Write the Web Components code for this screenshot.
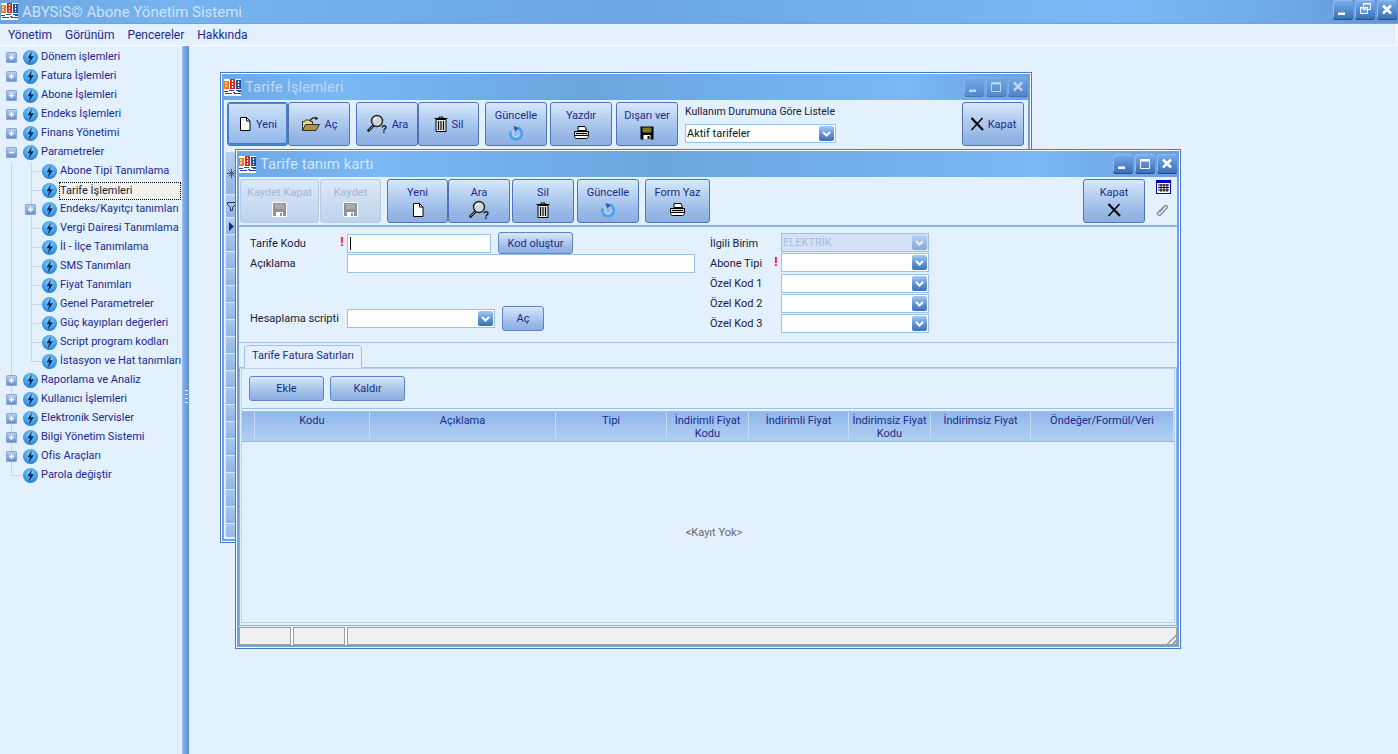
<!DOCTYPE html>
<html lang="tr">
<head>
<meta charset="utf-8">
<title>ABYSiS Abone Yönetim Sistemi</title>
<style>
  html, body { margin: 0; height: 100%; overflow: hidden; }
  body { background: #e3f0fe; font: 11px Roboto, "Noto Sans", sans-serif; color: #15428b; }
  app-shell { height: 754px; }
</style>
</head>
<body>
<app-shell>
  <tree-panel slot="tree">
    <tree-item mode="plus" label="Dönem işlemleri"></tree-item>
    <tree-item mode="plus" label="Fatura İşlemleri"></tree-item>
    <tree-item mode="plus" label="Abone İşlemleri"></tree-item>
    <tree-item mode="plus" label="Endeks İşlemleri"></tree-item>
    <tree-item mode="plus" label="Finans Yönetimi"></tree-item>
    <tree-item mode="minus" label="Parametreler"></tree-item>
    <tree-item child label="Abone Tipi Tanımlama"></tree-item>
    <tree-item child selected label="Tarife İşlemleri"></tree-item>
    <tree-item child mode="plus" label="Endeks/Kayıtçı tanımları"></tree-item>
    <tree-item child label="Vergi Dairesi Tanımlama"></tree-item>
    <tree-item child label="İl - İlçe Tanımlama"></tree-item>
    <tree-item child label="SMS Tanımları"></tree-item>
    <tree-item child label="Fiyat Tanımları"></tree-item>
    <tree-item child label="Genel Parametreler"></tree-item>
    <tree-item child label="Güç kayıpları değerleri"></tree-item>
    <tree-item child label="Script program kodları"></tree-item>
    <tree-item child label="İstasyon ve Hat tanımları"></tree-item>
    <tree-item mode="plus" label="Raporlama ve Analiz"></tree-item>
    <tree-item mode="plus" label="Kullanıcı İşlemleri"></tree-item>
    <tree-item mode="plus" label="Elektronik Servisler"></tree-item>
    <tree-item mode="plus" label="Bilgi Yönetim Sistemi"></tree-item>
    <tree-item mode="plus" label="Ofis Araçları"></tree-item>
    <tree-item mode="none" label="Parola değiştir"></tree-item>
  </tree-panel>

  <mdi-window slot="desk" caption="Tarife İşlemleri" inactive style="left:31px;top:26px;width:812px;height:471px">
    <back-toolbar></back-toolbar>
  </mdi-window>

  <mdi-window slot="desk" caption="Tarife tanım kartı" style="left:46px;top:103px;width:946px;height:500px">
    <card-content></card-content>
  </mdi-window>
</app-shell>

<script>
// icon set, all drawn on small viewBoxes
const ICONS = {
  doc: `<svg width="14" height="16" viewBox="0 0 14 16"><path d="M2.500 1.500h6l3.500 3.500v9.500h-9.500z" fill="#fff" stroke="#000"/><path d="M8.500 1.500v3.500h3.500" fill="none" stroke="#000"/></svg>`,
  folder: `<svg width="20" height="16" viewBox="0 0 20 16"><path d="M1.500 14.500v-9h2l1-1.500h4l1 1.500h2v9z" fill="#e8d87a" stroke="#333"/><path d="M1.500 14.500l3-6h14l-3.500 6z" fill="#a8963c" stroke="#333"/><path d="M9 5c1-3 4-4 7-2.500" fill="none" stroke="#222" stroke-width="1.300"/><path d="M14.500 0.500l3 2-3 1.800z" fill="#222"/></svg>`,
  find: `<svg width="22" height="20" viewBox="0 0 22 20"><path d="M8 11L2.500 16.500" stroke="#111" stroke-width="2.600" stroke-linecap="round"/><path d="M8 11L3 16" stroke="#ddd" stroke-width=".7"/><circle cx="11" cy="7" r="5.500" fill="#cfd6dc" stroke="#222" stroke-width="1.400"/><path d="M8 6c.5-1.500 1.500-2 3-2.200" fill="none" stroke="#fff" stroke-width="1.300"/><text x="15" y="19" font-family="Liberation Sans,sans-serif" font-weight="700" font-size="10" fill="#111">?</text></svg>`,
  trash: `<svg width="14" height="16" viewBox="0 0 14 16"><path d="M.5 2.500h13M5 2.500v-1.500h4v1.500" fill="none" stroke="#000"/><path d="M2 3.500h10v12H2z" fill="#eee" stroke="#000"/><path d="M4.500 5v9M7 5v9M9.500 5v9" stroke="#000" stroke-width="1.200"/></svg>`,
  refresh: `<svg width="16" height="16" viewBox="0 0 16 16"><path d="M9.500 2.800a5.800 5.800 0 1 1-6.800 3.400" fill="none" stroke="#4aa0ee" stroke-width="2.600"/><path d="M8 5.300a3.200 3.200 0 1 0 3.200 3.200" fill="none" stroke="#a8d6fa" stroke-width="1.400"/><path d="M5.500 .8l5.500 2.200-4 3.800z" fill="#2d5fae"/></svg>`,
  printer: `<svg width="17" height="15" viewBox="0 0 17 15"><path d="M5 5.500V1.500h7l1.500 4z" fill="#fff" stroke="#000"/><path d="M1.500 6.500h14v4h-14z" fill="#d8d8d8" stroke="#000"/><path d="M1.500 10.500c0 2 1 3 2 3h10c1 0 2-1 2-3z" fill="#fff" stroke="#000"/><path d="M3 8.500h11" stroke="#000"/><path d="M10 7.500h3" stroke="#f1e03a"/></svg>`,
  floppy: `<svg width="14" height="14" viewBox="0 0 14 14"><path d="M.5.500h13v13H.5z" fill="#000"/><path d="M2.500 1.500h9v5h-9z" fill="#7f7a1e"/><path d="M3.500 9h7v4.500h-7z" fill="#fff"/><path d="M7.500 10h2v3h-2z" fill="#000"/></svg>`,
  floppyOff: `<svg width="15" height="15" viewBox="0 0 15 15"><path d="M.5.500h14v14H.5z" fill="#8f9398" stroke="#fff"/><path d="M3 2h9v5H3z" fill="#a8acb1"/><path d="M4 10h7v4.500H4z" fill="#fff"/><path d="M8 11h2v3H8z" fill="#8f9398"/></svg>`,
  cross: `<svg width="14" height="14" viewBox="0 0 14 14"><path d="M1.500 1l11.500 12" stroke="#000" stroke-width="2.200"/><path d="M12.500 1L1.500 13" stroke="#000" stroke-width="1.500"/></svg>`
};

const GLOSS = 'linear-gradient(#d8e8fa 0%, #bcd4f2 30%, #98b9e6 75%, #8cafe2 100%)';

customElements.define('app-shell', class extends HTMLElement {
  constructor() {
    super();
    this.attachShadow({mode: 'open'}).innerHTML = `
    <style>
      :host { display: flex; flex-direction: column; }
      .title {
        height: 23px; display: flex; align-items: center; gap: 4px; padding-left: 1px;
        background: linear-gradient(90deg, #6aa5e2 0, #76b3f0 12%, #6ba6e2 45%, #79b8f6 80%, #6ea9e6 92%, #5f95d2 100%);
        border-bottom: 1px solid #9a9a9a;
        color: #cfe3f8; font-size: 15px;
      }
      .title span { flex: 1; }
      .ctl { display: flex; gap: 2px; padding-right: 1px; align-self: flex-start; }
      .menu {
        height: 21px; display: flex; align-items: center; gap: 13px; padding-left: 8px;
        border-bottom: 1px solid #fff; border-right: 1px solid #fff; margin-right: 1px;
        font-size: 12px; color: #1c2a8c;
      }
      .main { flex: 1; display: flex; min-height: 0; }
      .side { width: 182px; flex: none; background: #e3f0fe; margin-top: 2px; }
      .split {
        width: 7px; flex: none; display: flex; align-items: center; justify-content: center;
        background: linear-gradient(90deg, #9cc4f0 0, #7ea8e2 30%, #6f9fdc 60%, #5b8ed6);
      }
      .split i { width: 3px; height: 13px; background: repeating-linear-gradient(#fff 0 1px, transparent 1px 4px); margin: -8px 0 0 1px; }
      .desk { flex: 1; position: relative; }
    </style>
    <div class="title">
      <app-logo></app-logo><span>ABYSiS© Abone Yönetim Sistemi</span>
      <div class="ctl">
        <win-btn kind="min"></win-btn><win-btn kind="restore"></win-btn><win-btn kind="close"></win-btn>
      </div>
    </div>
    <div class="menu"><span>Yönetim</span><span>Görünüm</span><span>Pencereler</span><span>Hakkında</span></div>
    <div class="main">
      <div class="side"><slot name="tree"></slot></div>
      <div class="split"><i></i></div>
      <div class="desk"><slot name="desk"></slot></div>
    </div>`;
  }
});

customElements.define('app-logo', class extends HTMLElement {
  constructor() {
    super();
    this.attachShadow({mode: 'open'}).innerHTML = `
    <style>:host { display: inline-flex; flex: none; }</style>
    <svg width="17" height="17" viewBox="0 0 17 17">
      <rect width="17" height="17" fill="#fff"/>
      <rect x="0" y="2" width="5" height="8" fill="#f07a20"/>
      <rect x="6" y="0" width="5" height="10" fill="#d8261c"/>
      <rect x="12" y="1" width="5" height="9" fill="#1f4f9a"/>
      <path d="M2 3v6M8.500 1v8M14.500 2v7" stroke="#fff" stroke-width="1.200" stroke-dasharray="2 1"/>
      <path d="M0 12h4v1H0zM5 11h5v1H5zM12 11h5v1h-5zM1 14h7v1H1zM10 14h7v1h-7zM9 13h2v1H9zM14 12h3v1h-3z" fill="#1f4f9a"/>
    </svg>`;
  }
});

customElements.define('win-btn', class extends HTMLElement {
  constructor() {
    super();
    const k = this.getAttribute('kind');
    const glyph = {
      min: '<path d="M5 12.500h7v2.500H5z" fill="#fff"/>',
      max: '<path d="M5.500 5.500h9v9h-9z" fill="none" stroke="#fff"/><path d="M5.500 6.500h9" stroke="#fff" stroke-width="2"/>',
      restore: '<path d="M8.500 3.500h7v6h-7zM5.500 7.500h7v6h-7z" fill="#6a9ddb" stroke="#fff"/><path d="M8 4h8M5 8h8" stroke="#fff"/>',
      close: '<path d="M6 5.500l8 8M14 5.500l-8 8" stroke="#fff" stroke-width="2.600"/>'
    }[k];
    this.attachShadow({mode: 'open'}).innerHTML = `
    <style>
      :host { display: inline-flex; width: 20px; height: 20px; flex: none; border-radius: 3px;
        background: linear-gradient(#7eb0ea 0, #5e93d6 40%, #3a6cb6 100%);
        box-shadow: inset 0 -1px 0 #1f4a96, inset 1px 1px 0 #8dbcf0; }
      svg { display: block; }
    </style>
    <svg width="20" height="20" viewBox="0 0 20 20">${glyph}</svg>`;
  }
});

customElements.define('tree-panel', class extends HTMLElement {
  constructor() {
    super();
    this.attachShadow({mode: 'open'}).innerHTML = `
    <style>
      :host { display: block; position: relative; }
      i { position: absolute; border-left: 1px solid #c8d6e8; }
    </style>
    <i style="left:11px;top:114px;height:313px"></i>
    <i style="left:31px;top:114px;height:200px"></i>
    <slot></slot>`;
  }
});

customElements.define('tree-item', class extends HTMLElement {
  constructor() {
    super();
    const mode = this.getAttribute('mode') || 'none';
    const child = this.hasAttribute('child');
    const sel = this.hasAttribute('selected');
    const sign = mode === 'none' ? '' :
      `<svg width="11" height="11" viewBox="0 0 11 11"><path d="M3 5.500h5" stroke="#fff" stroke-width="1.500"/>${mode === 'plus' ? '<path d="M5.500 3v5" stroke="#fff" stroke-width="1.500"/>' : ''}</svg>`;
    this.attachShadow({mode: 'open'}).innerHTML = `
    <style>
      :host { display: flex; align-items: center; height: 19px; padding-left: ${child ? 25 : 6}px; color: #1c2a8c; font-size: 11px; white-space: nowrap; position: relative; }
      .box { width: 11px; height: 11px; flex: none; margin-right: 6px; position: relative; }
      .box.on { background: linear-gradient(#c6d7ef, #7d9fd4 70%, #5d83bf); border-radius: 2px; box-shadow: inset 0 0 0 1px #8aa7d4; }
      .box svg { display: block; }
      .tick { position: absolute; top: 5px; left: ${child ? 6 : 5}px; width: 11px; border-top: 1px solid #c8d6e8; }
      .bolt { width: 15px; height: 15px; flex: none; margin-right: 3px; display: block; }
      .t { height: 15px; line-height: 14px; box-sizing: border-box; }
      .t.sel { width: 122px; height: 18px; line-height: 17px; margin-left: -1px; background: #f1f1ee; outline: 1px dotted #000; outline-offset: -1px; color: #1a1a3a; padding-left: 1px; }
    </style>
    <span class="box ${mode === 'none' ? '' : 'on'}">${sign}${mode === 'none' ? '<i class="tick"></i>' : ''}</span>
    <svg class="bolt" viewBox="0 0 15 15">
      <defs><radialGradient id="g" cx=".5" cy=".35" r=".7"><stop offset="0" stop-color="#8fd0fa"/><stop offset=".65" stop-color="#3d9be6"/><stop offset="1" stop-color="#1a70c4"/></radialGradient></defs>
      <circle cx="7.500" cy="7.500" r="7.500" fill="url(#g)"/>
      <path d="M8.800 1.500L4.500 8.200h2.600l-1.300 5.300L11 6.200H8z" fill="#082a5e"/>
    </svg>
    <span class="t ${sel ? 'sel' : ''}">${this.getAttribute('label')}</span>`;
  }
});

// windows on the MDI desktop, placed by the style attribute
customElements.define('mdi-window', class extends HTMLElement {
  constructor() {
    super();
    const off = this.hasAttribute('inactive');
    this.attachShadow({mode: 'open'}).innerHTML = `
    <style>
      :host { display: flex; flex-direction: column; position: absolute; box-sizing: border-box;
        border: 1px solid #4a78c6; background: #6fa3e0; box-shadow: inset 0 0 0 1px #fff; padding: 1px 3px 3px 3px; }
      .bar {
        height: 26px; flex: none; margin: 0 -2px; padding: 0 2px; display: flex; align-items: center; gap: 4px;
        background: linear-gradient(90deg, #6da8e6, #79b7f5 14%, #6ba5e0 45%, #79b7f5 85%, #6a9fdc);
        color: #d3e6fa; font-size: 15px;
      }
      .bar span { flex: 1; ${off ? 'color:#bcd8f5;' : ''} }
      .ctl { display: flex; gap: 2px; ${off ? 'opacity:.55;' : 'margin-top:-1px;'} }
      .body { flex: 1; min-height: 0; background: #e3f0fe; display: flex; flex-direction: column; }
    </style>
    <div class="bar">
      <app-logo></app-logo><span>${this.getAttribute('caption')}</span>
      <div class="ctl"><win-btn kind="min"></win-btn><win-btn kind="max"></win-btn><win-btn kind="close"></win-btn></div>
    </div>
    <div class="body"><slot></slot></div>`;
  }
});

// toolbar button. layout=row puts the icon left of the text, otherwise it goes under it
customElements.define('tool-btn', class extends HTMLElement {
  constructor() {
    super();
    const row = this.getAttribute('layout') === 'row';
    const off = this.hasAttribute('disabled');
    this.attachShadow({mode: 'open'}).innerHTML = `
    <style>
      :host { display: flex; flex: none; box-sizing: border-box; height: 44px; width: var(--w, 62px);
        flex-direction: ${row ? 'row' : 'column'}; align-items: center; justify-content: center; gap: ${row ? 4 : 2}px;
        padding-top: ${row ? 0 : 2}px;
        border: 1px solid ${off ? '#b6cbe6' : '#4f74b8'}; border-radius: 3px;
        background: ${off ? 'linear-gradient(#dce9f8, #bdd2ec)' : GLOSS};
        color: ${off ? '#9fb7d8' : '#1c2a8c'}; font-size: 11px; white-space: nowrap; }
      :host([hot]) { background: linear-gradient(#cfe2f8, #8fb6ea); box-shadow: inset 0 0 0 1px #4a86d0, inset 0 -2px 0 #3f7dcc; }
      svg { display: block; }
      .i { display: flex; height: 18px; align-items: center; }
    </style>
    <span class="i">${ICONS[this.getAttribute('icon')] || ''}</span><span>${this.getAttribute('text') || ''}</span>`;
    if (!row) { // text goes on top
      const s = this.shadowRoot;
      s.insertBefore(s.lastElementChild, s.querySelector('.i'));
    }
  }
});

customElements.define('flat-btn', class extends HTMLElement {
  constructor() {
    super();
    this.attachShadow({mode: 'open'}).innerHTML = `
    <style>
      :host { display: flex; align-items: center; justify-content: center; box-sizing: border-box; flex: none;
        border: 1px solid #5f85c4; border-radius: 3px; background: ${GLOSS}; color: #1c2a8c; font-size: 11px; }
    </style><slot></slot>`;
  }
});

customElements.define('combo-box', class extends HTMLElement {
  constructor() {
    super();
    const off = this.hasAttribute('disabled');
    this.attachShadow({mode: 'open'}).innerHTML = `
    <style>
      :host { display: flex; align-items: center; box-sizing: border-box; height: 19px; flex: none;
        border: 1px solid #9dc0ec; background: ${off ? '#d3e2f4' : '#fff'}; color: ${off ? '#a4bee0' : '#111'};
        font-size: 11px; padding: 0 1px 0 1px; }
      span { flex: 1; white-space: nowrap; overflow: hidden; }
      .b { width: 15px; height: 15px; flex: none; border-radius: 2px; ${off ? 'opacity:.5;' : ''}
        background: linear-gradient(#a9c9f0, #5f93d6 55%, #3f6fb8); display: block; }
    </style>
    <span><slot></slot></span>
    <svg class="b" viewBox="0 0 15 15"><path d="M4 6l3.500 3.500L11 6" fill="none" stroke="#fff" stroke-width="2"/></svg>`;
  }
});

customElements.define('back-toolbar', class extends HTMLElement {
  constructor() {
    super();
    this.attachShadow({mode: 'open'}).innerHTML = `
    <style>
      :host { display: flex; flex-direction: column; flex: 1; min-height: 0; }
      .tb { display: flex; height: 48px; flex: none; padding: 2px 4px 0 3px; box-sizing: border-box; }
      .g { width: 6px; flex: none; }
      .pick { display: flex; flex-direction: column; width: 151px; margin-left: 7px; gap: 4px; color: #1a1a3a; padding-top: 2px; white-space: nowrap; }
      .pick b { font-weight: 400; height: 16px; font-size: 10.500px; line-height: 16px; }
      .fill { flex: 1; }
      .strip { flex: 1; min-height: 0; margin: 4px 0 2px 1px; width: 12px; display: flex; flex-direction: column; color: #15428b; }
      .strip i { display: flex; align-items: center; justify-content: center; flex: none; box-sizing: border-box; padding-right: 1px;
        background: linear-gradient(#b4cff1, #8fb4e8); border-bottom: 1px solid #d8e7f9; border-left: 1px solid #d8e7f9; }
      .strip .rows { flex: 1; min-height: 0; background: repeating-linear-gradient(#a9c7ef 0, #8fb4e8 16px, #d8e7f9 16px, #d8e7f9 17px); border-left: 1px solid #d8e7f9; }
    </style>
    <div class="tb">
      <tool-btn layout="row" hot icon="doc" text="Yeni" style="--w:61px"></tool-btn>
      <tool-btn layout="row" icon="folder" text="Aç"></tool-btn>
      <div class="g"></div>
      <tool-btn layout="row" icon="find" text="Ara"></tool-btn>
      <tool-btn layout="row" icon="trash" text="Sil" style="--w:61px"></tool-btn>
      <div class="g"></div>
      <tool-btn icon="refresh" text="Güncelle"></tool-btn>
      <div class="g" style="width:3px"></div>
      <tool-btn icon="printer" text="Yazdır"></tool-btn>
      <div class="g" style="width:4px"></div>
      <tool-btn icon="floppy" text="Dışarı ver"></tool-btn>
      <div class="pick"><b>Kullanım Durumuna Göre Listele</b><combo-box>Aktif tarifeler</combo-box></div>
      <div class="fill"></div>
      <tool-btn layout="row" icon="cross" text="Kapat"></tool-btn>
    </div>
    <div class="strip">
      <i style="height:43px">
        <svg width="9" height="9" viewBox="0 0 9 9"><path d="M4.500 0v9M0 4.500h9M1.500 1.500l6 6M7.500 1.500l-6 6" stroke="#1d2f66" stroke-dasharray="1.500 .5"/></svg>
      </i>
      <i style="height:23px">
        <svg width="9" height="9" viewBox="0 0 9 9"><path d="M.5.500h8v2L5.500 5.500v3h-2v-3L.5 2.500z" fill="none" stroke="#1d2f66"/></svg>
      </i>
      <i style="height:17px">
        <svg width="6" height="9" viewBox="0 0 6 9"><path d="M1 0l5 4.500L1 9z" fill="#15306e"/></svg>
      </i>
      <div class="rows"></div>
    </div>`;
  }
});

customElements.define('card-content', class extends HTMLElement {
  constructor() {
    super();
    const cols = [
      ['Kodu', 115], ['Açıklama', 186], ['Tipi', 111], ['İndirimli Fiyat<br>Kodu', 82],
      ['İndirimli Fiyat', 100], ['İndirimsiz Fiyat<br>Kodu', 82], ['İndirimsiz Fiyat', 100], ['Öndeğer/Formül/Veri', 143]
    ];
    this.attachShadow({mode: 'open'}).innerHTML = `
    <style>
      :host { display: flex; flex-direction: column; flex: 1; min-height: 0; }
      .tb { display: flex; height: 50px; flex: none; padding: 2px 0 0 1px; box-sizing: border-box; border-bottom: 2px solid #8ab4e8; }
      .g { width: 6px; flex: none; }
      .fill { flex: 1; }
      .side { width: 32px; flex: none; display: flex; flex-direction: column; align-items: flex-start; gap: 9px; padding: 1px 0 0 11px; box-sizing: border-box; }
      .side svg { display: block; }
      .form { height: 116px; flex: none; display: flex; box-sizing: border-box; border-bottom: 1px solid #9dc0ec; color: #1a1a3a; }
      .left { width: 467px; flex: none; padding: 6px 0 0 11px; box-sizing: border-box; }
      .right { flex: 1; padding: 6px 0 0 4px; display: flex; flex-direction: column; gap: 1px; }
      .r { display: flex; align-items: center; }
      .r label { width: 97px; flex: none; white-space: nowrap; position: relative; }
      .right .r label { width: 71px; }
      .excl { position: absolute; color: #f00; font-weight: 700; right: 3px; top: -2px; font-size: 12px; font-family: "Liberation Sans", sans-serif; }
      .txt { box-sizing: border-box; height: 19px; border: 1px solid #9dc0ec; background: #fff; flex: none; }
      .caret { width: 1px; height: 13px; background: #000; margin: 2px 0 0 2px; }
      .tabs { height: 25px; flex: none; padding: 2px 0 0 5px; box-sizing: border-box; border-bottom: 1px solid #9dc0ec; }
      .tab { width: 118px; height: 23px; box-sizing: border-box; display: flex; align-items: center; justify-content: center; padding-bottom: 2px;
        border: 1px solid #9dc0ec; border-bottom: 1px solid #e3f0fe; border-radius: 5px 5px 0 0 / 3px 3px 0 0; color: #1c2a8c; background: #e3f0fe; }
      .panel { flex: 1; min-height: 0; border: 1px solid #8ab4e8; border-top: 0; padding: 0 1px 2px 1px; display: flex; flex-direction: column; }
      .inner { flex: 1; min-height: 0; border: 1px solid #b8d2f2; display: flex; flex-direction: column; }
      .acts { height: 40px; flex: none; box-sizing: border-box; border-bottom: 1px solid #9dc0ec; display: flex; align-items: center; padding-left: 7px; gap: 6px; }
      .acts flat-btn { width: 75px; height: 25px; }
      .grid { flex: 1; min-height: 0; display: flex; flex-direction: column; }
      .head { display: flex; height: 31px; flex: none; box-sizing: border-box; margin-top: 2px; border-top: 1px solid #9dc0ec; border-bottom: 1px solid #8fb4e8; background: linear-gradient(#8fb6ea, #b4d0f3); }
      .head > div { box-sizing: border-box; flex: none; text-align: center; line-height: 13px; padding-top: 2px; border-right: 1px solid #c6dcf6; color: #1c2a8c; }
      .empty { flex: 1; display: flex; align-items: center; justify-content: center; color: #6a6a6a; padding-left: 12px; }
      .status { height: 18px; flex: none; display: flex; gap: 2px; margin-top: 1px; background: #fff; position: relative; }
      .status i { box-sizing: border-box; height: 18px; border: 1px solid #9f9f9f; background: #f0f0f0; flex: none; display: block; }
      .grip { position: absolute; right: 0; bottom: 0; width: 13px; height: 13px; background: repeating-linear-gradient(135deg, transparent 0 2px, #a0a0a0 2px 4px); clip-path: polygon(100% 0, 100% 100%, 0 100%); }
    </style>
    <div class="tb">
      <tool-btn disabled icon="floppyOff" text="Kaydet Kapat" style="--w:79px"></tool-btn>
      <tool-btn disabled icon="floppyOff" text="Kaydet" style="--w:61px;margin-left:1px"></tool-btn>
      <div class="g"></div>
      <tool-btn icon="doc" text="Yeni" style="--w:61px"></tool-btn>
      <tool-btn icon="find" text="Ara"></tool-btn>
      <div class="g" style="width:2px"></div>
      <tool-btn icon="trash" text="Sil"></tool-btn>
      <div class="g" style="width:3px"></div>
      <tool-btn icon="refresh" text="Güncelle"></tool-btn>
      <div class="g"></div>
      <tool-btn icon="printer" text="Form Yaz" style="--w:65px"></tool-btn>
      <div class="fill"></div>
      <tool-btn icon="cross" text="Kapat"></tool-btn>
      <div class="side">
        <svg width="15" height="14" viewBox="0 0 15 14"><path d="M0 0h15v14H0z" fill="#0000c8"/><path d="M1 3h13v10H1z" fill="#fff"/><path d="M2 5h11M2 7.500h11M2 10h11" stroke="#000" stroke-width="1.200"/><path d="M5 4v8M8 4v8M11 4v8" stroke="#000"/></svg>
        <svg width="14" height="15" viewBox="0 0 14 15"><path d="M3.500 9L9 3c1.500-1.500 3.500 .5 2 2l-6.500 7c-1.500 1.500-4-1-2.500-2.500L8.500 3" fill="none" stroke="#8a8a8a" stroke-width="1.300"/></svg>
      </div>
    </div>
    <div class="form">
      <div class="left">
        <div class="r" style="height:20px">
          <label>Tarife Kodu<b class="excl">!</b></label>
          <div class="txt" style="width:144px"><div class="caret"></div></div>
          <flat-btn style="width:75px;height:22px;margin-left:7px">Kod oluştur</flat-btn>
        </div>
        <div class="r" style="height:19px;margin-top:1px">
          <label>Açıklama</label>
          <div class="txt" style="width:348px"></div>
        </div>
        <div class="r" style="height:25px;margin-top:33px">
          <label style="margin-top:-1px">Hesaplama scripti</label>
          <combo-box style="width:148px"></combo-box>
          <flat-btn style="width:42px;height:25px;margin-left:7px">Aç</flat-btn>
        </div>
      </div>
      <div class="right">
        <div class="r"><label style="margin-top:2px">İlgili Birim</label><combo-box disabled style="width:148px">ELEKTRİK</combo-box></div>
        <div class="r"><label style="margin-top:2px">Abone Tipi<b class="excl">!</b></label><combo-box style="width:148px"></combo-box></div>
        <div class="r" style="margin-top:1px"><label>Özel Kod 1</label><combo-box style="width:148px"></combo-box></div>
        <div class="r"><label>Özel Kod 2</label><combo-box style="width:148px"></combo-box></div>
        <div class="r"><label>Özel Kod 3</label><combo-box style="width:148px"></combo-box></div>
      </div>
    </div>
    <div class="tabs"><div class="tab">Tarife Fatura Satırları</div></div>
    <div class="panel">
      <div class="inner">
        <div class="acts"><flat-btn>Ekle</flat-btn><flat-btn>Kaldır</flat-btn></div>
        <div class="grid">
          <div class="head">
            <div style="width:13px"></div>
            ${cols.map(c => `<div style="width:${c[1]}px">${c[0]}</div>`).join('')}
          </div>
          <div class="empty">&lt;Kayıt Yok&gt;</div>
        </div>
      </div>
    </div>
    <div class="status">
      <i style="width:52px"></i><i style="width:52px"></i><i style="flex:1"></i>
      <div class="grip"></div>
    </div>`;
  }
});
</script>
</body>
</html>
